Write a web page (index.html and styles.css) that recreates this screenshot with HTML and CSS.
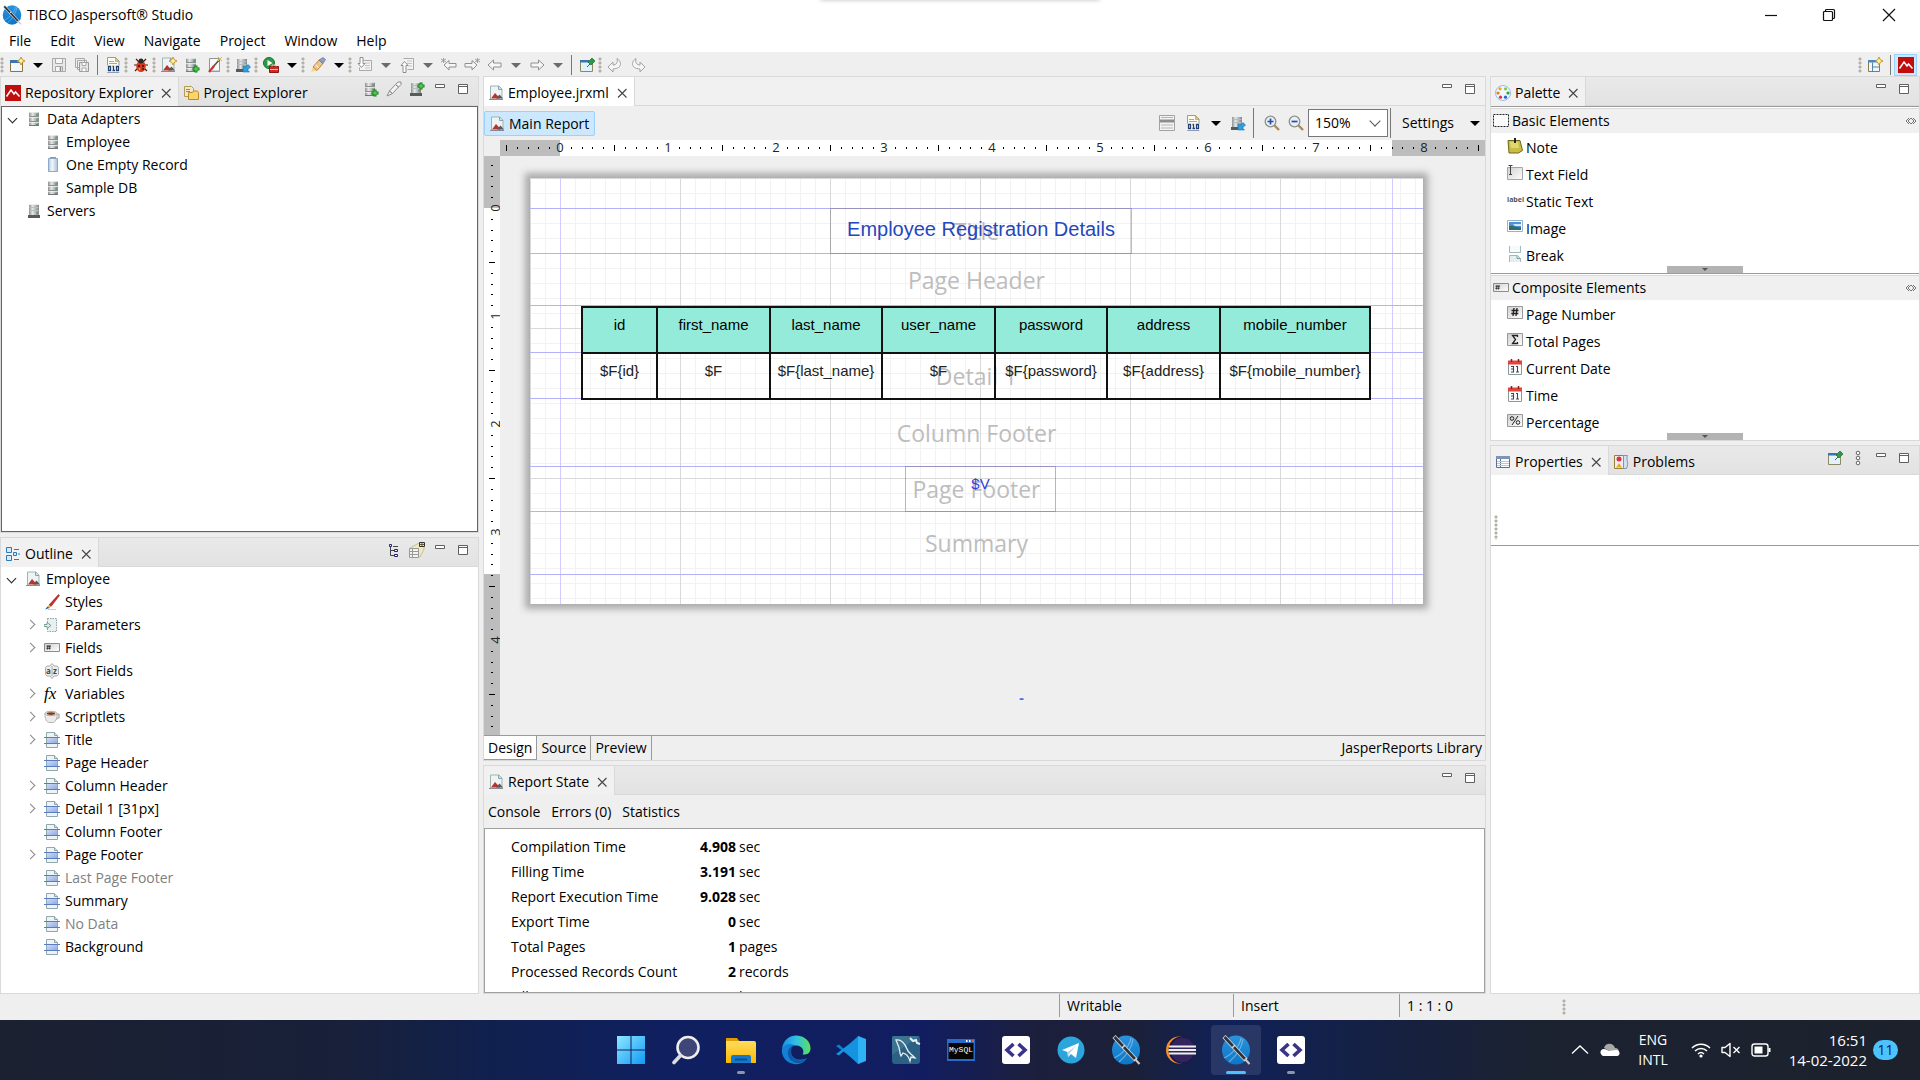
FILE: index.html
```html
<!DOCTYPE html>
<html lang="en">
<head>
<meta charset="utf-8">
<title>TIBCO Jaspersoft® Studio</title>
<link rel="stylesheet" href="styles.css">
</head>
<body>
<svg class="sprite" aria-hidden="true">
  <defs>
    <linearGradient id="g-metal" x1="0" x2="1"><stop offset="0" stop-color="#8d9191"/><stop offset=".35" stop-color="#e4e6e6"/><stop offset="1" stop-color="#7f8585"/></linearGradient>
    <linearGradient id="g-glass" x1="0" x2="1"><stop offset="0" stop-color="#a9c4de"/><stop offset=".4" stop-color="#f2f8fd"/><stop offset="1" stop-color="#a9c0d8"/></linearGradient>
    <linearGradient id="g-band" x1="0" y1="0" x2="1" y2="1"><stop offset="0" stop-color="#d5e2f5"/><stop offset="1" stop-color="#8faae6"/></linearGradient>
    <linearGradient id="g-box" x1="0" y1="0" x2="1" y2="1"><stop offset="0" stop-color="#cfcfcf"/><stop offset="1" stop-color="#fff"/></linearGradient>
    <linearGradient id="g-win" x1="0" y1="0" x2="1" y2="1"><stop offset="0" stop-color="#8fe6ff"/><stop offset="1" stop-color="#0f9bf5"/></linearGradient>
    <linearGradient id="g-fold" x1="0" y1="0" x2="0" y2="1"><stop offset="0" stop-color="#ffdc5e"/><stop offset="1" stop-color="#fbb800"/></linearGradient>
    <linearGradient id="g-edge" x1="0" y1="0" x2="1" y2="0"><stop offset="0" stop-color="#1b8fe0"/><stop offset=".5" stop-color="#2fc0e6"/><stop offset="1" stop-color="#5fe05a"/></linearGradient>
    <linearGradient id="g-jas" x1="0" y1="0" x2="0" y2="1"><stop offset="0" stop-color="#2b93dc"/><stop offset="1" stop-color="#0c76c8"/></linearGradient>
  </defs>
  <symbol id="i-db" viewBox="0 0 16 16"><path d="M3 1h10v14H3z" fill="url(#g-metal)"/><path d="M3 5.500h10M3 10.500h10" stroke="#8b9090"/><path d="M3 1.500h10M3 6.500h10M3 11.500h10" stroke="#f4f4f4" opacity=".7"/><path d="M3 14.500h10" stroke="#777"/><path d="M10 4h2M10 9h2M10 13.500h2" stroke="#4a9a5a"/></symbol>
  <symbol id="i-plus" viewBox="0 0 16 16"><path d="M12 8.500v7M8.500 12h7" stroke="#137a1c" stroke-width="3"/><path d="M12 9.500v5M9.500 12h5" stroke="#4fd04f" stroke-width="1.400"/></symbol>
  <symbol id="i-dbadd" viewBox="0 0 16 16"><use href="#i-db" x="-1" width="16" height="16"/><use href="#i-plus" width="16" height="16"/></symbol>
  <symbol id="i-glass" viewBox="0 0 16 16"><path d="M3.500 1.500h9v13h-9z" fill="url(#g-glass)" stroke="#8fa9c4"/><path d="M5 .5h6" stroke="#8b98a5"/></symbol>
  <symbol id="i-server" viewBox="0 0 16 16"><path d="M3 1h10v11H3z" fill="url(#g-metal)"/><path d="M3 1.500h10" stroke="#eee"/><path d="M3.500 4.500h9M3.500 7.500h9" stroke="#b8bcbc"/><path d="M2 12h12v3H2z" fill="#555b5b"/><path d="M10 10h2" stroke="#4a9a5a"/></symbol>
  <symbol id="i-serveradd" viewBox="0 0 16 16"><use href="#i-server" x="-1" width="16" height="16"/><use href="#i-plus" y="-7" width="16" height="16"/></symbol>
  <symbol id="i-serverblue" viewBox="0 0 16 16"><use href="#i-server" x="-1" width="16" height="16"/><path d="M8 8.500v6.500h6.500L12.500 13l3-3-2.500-2.500-3 3z" fill="#2f9fe6" stroke="#1670b0" stroke-width=".6"/></symbol>
  <symbol id="i-report" viewBox="0 0 16 16"><path d="M2.500 1h8.500l3 3v10.500h-11.500z" fill="#eef4f4" stroke="#9fb3b3"/><path d="M10.500 1v3.500h3.500" fill="#cfe0e0" stroke="#8fa5a5"/><path d="M3 13.500 7 8l5 5.500z" fill="#b8322e"/><path d="M8 13.500 11.500 9.500l3.500 4z" fill="#5e5555"/><path d="M1 14.500h14" stroke="#889"/></symbol>
  <symbol id="i-star" viewBox="0 0 16 16"><path d="M12 0l1.300 2.700L16 4l-2.700 1.300L12 8l-1.300-2.700L8 4l2.700-1.300z" fill="#fff0a0" stroke="#c08d18" stroke-width=".9"/></symbol>
  <symbol id="i-reportnew" viewBox="0 0 16 16"><use href="#i-report" x="-1" width="16" height="16"/><use href="#i-star" width="16" height="16"/></symbol>
  <symbol id="i-new" viewBox="0 0 16 16"><path d="M1.500 4.500h12v10h-12z" fill="#f2f7fc" stroke="#8b7440"/><path d="M1 3h12v3H1z" fill="#3d74ad"/><use href="#i-star" width="16" height="16"/></symbol>
  <symbol id="i-save" viewBox="0 0 16 16"><path d="M1.500 1.500h13v13h-13z" fill="#e8e8e8" stroke="#a8a8a8"/><path d="M4.500 1.500h7v5h-7zM4.500 9.500h7v5h-7z" fill="#f6f6f6" stroke="#a8a8a8"/><path d="M9.500 10v4" stroke="#888" stroke-width="1.500"/></symbol>
  <symbol id="i-saveall" viewBox="0 0 16 16"><path d="M1.500 1.500h9v9h-9zM3.500 3.500h9v9h-9z" fill="#eee" stroke="#a8a8a8"/><path d="M5.500 5.500h9v9h-9z" fill="#e8e8e8" stroke="#999"/><path d="M8 5.500h4v3H8zM8 11h4v3.500H8z" fill="#fff" stroke="#a8a8a8"/></symbol>
  <symbol id="i-bin" viewBox="0 0 16 16"><path d="M2.500.5h8l3.500 3.500v11.500H2.500z" fill="#fbfbf2" stroke="#8e9db5"/><path d="M10.500.5v4H14z" fill="#e8c86a" stroke="#b59336" stroke-width=".6"/><path d="M4 4.500h5M4 6.500h8" stroke="#8fabd0"/><path d="M2 8.500h13v6.500H2z" fill="#fbfbf2"/><path d="M3.500 9.500h2v4h-2zM11.500 9.500h2v4h-2zM7.500 9.500h1v4m-1 0h2.500" fill="none" stroke="#22406f" stroke-width="1.300"/></symbol>
  <symbol id="i-bug" viewBox="0 0 16 16"><path d="M3 2l3 3M13 2l-3 3M1 8h4M15 8h-4M2 14l3-3M14 14l-3-3" stroke="#402010" stroke-width="1.200"/><ellipse cx="8" cy="9.500" rx="4.700" ry="5.500" fill="#d9381a"/><circle cx="8" cy="4" r="2.500" fill="#2a2a2a"/><circle cx="6" cy="9" r="1" fill="#3a0d00"/><circle cx="10" cy="9" r="1" fill="#3a0d00"/><circle cx="6.500" cy="12" r=".9" fill="#f2b13c"/><circle cx="10" cy="12" r=".9" fill="#3a0d00"/></symbol>
  <symbol id="i-wand" viewBox="0 0 16 16"><path d="M2.500 1.500h10v13h-10z" fill="#f7faf5" stroke="#8a9a90"/><path d="M6 10 13 2" stroke="#555" stroke-width="1.600"/><path d="M2 15l5-6" stroke="#c33" stroke-width="2.400"/><path d="M11 0l4 4M15 0l-4 4" stroke="#e4b53a"/><path d="M4 14h9" stroke="#a9b"/></symbol>
  <symbol id="i-run" viewBox="0 0 16 16"><circle cx="6" cy="6" r="5.500" fill="#2c9b45" stroke="#17702b"/><path d="M4.500 3l5 3-5 3z" fill="#fff"/><path d="M6.500 9.500h9v6h-9z" fill="#cf2a22" stroke="#8d1712"/><path d="M9 9.500v-1.500h4v1.500M7 12.500h8" stroke="#fbb" fill="none"/></symbol>
  <symbol id="i-torch" viewBox="0 0 16 16"><path d="M1 15l2-5 4 3.500z" fill="#f6d878"/><path d="M3 10 9 3l4 3.500-6 7z" fill="#f2c48a" stroke="#a8743a" stroke-width=".8"/><path d="M9 3l4-2.500 2.500 2L13 6.500z" fill="#8fa0c0" stroke="#56688d" stroke-width=".6"/><path d="M5.500 8l3 2.500" stroke="#fff"/></symbol>
  <symbol id="i-down" viewBox="0 0 16 16"><path d="M6.500 3.500h8v10h-12v-3" fill="#f4f4f4" stroke="#a9a9a9"/><path d="M8 6h5M8 8.500h5M8 11h5" stroke="#c2c2c2"/><path d="M3 .5h3v6h2L4.500 10.500 1 6.500h2z" fill="#fff" stroke="#8e8e8e"/></symbol>
  <symbol id="i-up" viewBox="0 0 16 16"><path d="M4.500 1.500h10v11h-6" fill="#f4f4f4" stroke="#a9a9a9"/><path d="M8 4h5M8 6.500h5M9 9h4" stroke="#c2c2c2"/><path d="M4 15.500h3v-7h2L5.500 4.500 2 8.500h2z" fill="#fff" stroke="#8e8e8e"/></symbol>
  <symbol id="i-back" viewBox="0 0 16 16"><path d="M1 8l5.500-5v3H14v4H6.500v3z" fill="#f6f6f6" stroke="#909090" stroke-linejoin="round"/></symbol>
  <symbol id="i-fwd" viewBox="0 0 16 16"><path d="M15 8 9.500 3v3H2v4h7.500v3z" fill="#f6f6f6" stroke="#909090" stroke-linejoin="round"/></symbol>
  <symbol id="i-backs" viewBox="0 0 16 16"><path d="M3 8l5-4.500v3h7v3.500H8V13z" fill="#f6f6f6" stroke="#909090" stroke-linejoin="round"/><path d="M2.500 1v5M0 2l5 3M5 2 0 5" stroke="#909090" stroke-width=".8"/></symbol>
  <symbol id="i-fwds" viewBox="0 0 16 16"><path d="M13 8 8 3.500v3H1v3.500h7V13z" fill="#f6f6f6" stroke="#909090" stroke-linejoin="round"/><path d="M13.500 1v5M11 2l5 3M16 2l-5 3" stroke="#909090" stroke-width=".8"/></symbol>
  <symbol id="i-pin" viewBox="0 0 16 16"><path d="M1.500 4.500h12v10h-12z" fill="#e2f2fb" stroke="#8d8a62"/><path d="M1 3h9v2.500H1z" fill="#3d74ad"/><path d="M8 10l3-3" stroke="#555"/><path d="M9 5l4-4 3 3-4 4z" fill="#2e9a48" stroke="#176a2b" stroke-width=".7"/></symbol>
  <symbol id="i-undo" viewBox="0 0 16 16"><path d="M1 10l5-5v3c3 0 5-2 4-6.500C14.500 4 16 11.500 6 12v3z" fill="#f6f6f6" stroke="#a2a2a2" stroke-linejoin="round"/></symbol>
  <symbol id="i-redo" viewBox="0 0 16 16"><path d="M15 10l-5-5v3C7 8 5 6 6 1.500 1.500 4 0 11.500 10 12v3z" fill="#f6f6f6" stroke="#a2a2a2" stroke-linejoin="round"/></symbol>
  <symbol id="i-persp" viewBox="0 0 16 16"><path d="M1.500 3.500h11v11h-11z" fill="#eef6fb" stroke="#8c7a48"/><path d="M1 3h12v2.500H1z" fill="#4d86bb"/><path d="M5.500 5.500v9M5.500 10h7" stroke="#5b83a3"/><use href="#i-star" width="16" height="16"/></symbol>
  <symbol id="i-jasper" viewBox="0 0 16 16"><path d="M0 0h16v16H0z" fill="#c00d0d"/><path d="M1.500 11.500 6 5l3 4 1.500-2 4 4.500" fill="none" stroke="#fff" stroke-width="1.500"/></symbol>
  <symbol id="i-project" viewBox="0 0 16 16"><path d="M1.500 1.500h7l2 2v8h-9z" fill="#f3e9c8" stroke="#b49a55"/><path d="M3 4.500h4M3 6.500h4" stroke="#6d8fc0"/><path d="M5.500 7.500h4l1-1.500h4l1 1.500v7h-10z" fill="#fbd46c" stroke="#b88a2a"/></symbol>
  <symbol id="i-link" viewBox="0 0 16 16"><path d="M1 15l2.500-5 3 2.500zM3.500 10l6-6.500 3 2.500-6 6.500zM9.500 3.500 12 1h3v2.500L12.500 6z" fill="#f4f4f4" stroke="#8c8c8c"/></symbol>
  <symbol id="i-min" viewBox="0 0 16 16"><path d="M3.500 3.500h9v3h-9z" fill="#fff" stroke="#606060"/></symbol>
  <symbol id="i-max" viewBox="0 0 16 16"><path d="M3.500 3.500h9v9h-9z" fill="#fff" stroke="#606060"/><path d="M3 5.500h10" stroke="#606060"/></symbol>
  <symbol id="i-x" viewBox="0 0 16 16"><path d="M4 4l8.500 8.500M12.500 4 4 12.500" stroke="#444" stroke-width="1.100"/></symbol>
  <symbol id="i-outline" viewBox="0 0 16 16"><path d="M1.500 1.500h5v5h-5zM1.500 9.500h5v5h-5z" fill="#d6eaf8" stroke="#2a7ab8"/><path d="M8.500 6.500h3v3h-3z" fill="#d6eaf8" stroke="#2a7ab8"/><path d="M9 3.500h5M13 8h2M9 13.500h5" stroke="#2a7ab8"/></symbol>
  <symbol id="i-treeview" viewBox="0 0 16 16"><path d="M4.500 4v9.500H8M4.500 8.500H8M7 4.500h5" fill="none" stroke="#444"/><path d="M3.500 2.500h2v2h-2zM8.500 7.500h3v2h-3zM8.500 12.500h3v2h-3z" fill="#fff" stroke="#24246e"/></symbol>
  <symbol id="i-thumb" viewBox="0 0 16 16"><path d="M1 6 10 1h5v6l-4 8z" fill="#efe9c4" stroke="#c9c08b"/><path d="M.5 6.500h9v9h-9z" fill="#f4f4ee" stroke="#999"/><path d="M.5 9.500h9M.5 12.500h9M3.500 7v8" stroke="#999"/><path d="M10.500.5h5v4h-5z" fill="#ffe64d" stroke="#333"/><path d="M13 .5v4M10.500 2.500h5" stroke="#333" stroke-width=".7"/></symbol>
  <symbol id="i-brush" viewBox="0 0 16 16"><path d="M5 11 14.500.5l1 1L7 12.500z" fill="#cc2e2e" stroke="#8d2222" stroke-width=".6"/><path d="M5 11l2 1.500-1.500 1.500L3.500 12.500z" fill="#d9b36a"/><path d="M3.500 12.500 5.500 14 1 15.500z" fill="#2c4fb0"/><path d="M4 15.500h8" stroke="#ccc"/></symbol>
  <symbol id="i-param" viewBox="0 0 16 16"><path d="M3.500 1.500h9v13h-9z" fill="#e7efef" stroke="#8fa5a5" stroke-dasharray="1.500 1"/><path d="M0 7.500h3V5.500l4 3-4 3V9.500H0z" fill="#dfeeea" stroke="#5f8a84" stroke-width=".8"/></symbol>
  <symbol id="i-fields" viewBox="0 0 16 16"><path d="M.5 3.500h15v8H.5z" fill="url(#g-box)" stroke="#8c8c8c"/><path d="M4 5l-.5 4.500M6 5l-.5 4.500M2.500 6.300h4.300M2.300 8.300h4.300" stroke="#333" stroke-width=".9"/></symbol>
  <symbol id="i-cup" viewBox="0 0 16 16"><path d="M12.500 5.500h2.500v3l-3.500 2" fill="none" stroke="#aaa" stroke-width="1.300"/><path d="M1 4.500h12c.5 5-2 9-4 9H5C3 13.500.5 9.500 1 4.500z" fill="#ececec" stroke="#b5b5b5"/><ellipse cx="7" cy="4.500" rx="6" ry="2.200" fill="#f7f3ee" stroke="#aaa"/><ellipse cx="7" cy="4.600" rx="4.300" ry="1.300" fill="#7b3e13"/></symbol>
  <symbol id="i-band" viewBox="0 0 16 16"><path d="M2.500.5h8l3 3v12h-11z" fill="#eef4f6" stroke="#8fa8ae"/><path d="M10.500.5v3h3" fill="#cfe0e0" stroke="#8fa5a5"/><path d="M3 5h10v6H3z" fill="url(#g-band)"/><path d="M0 5.500h16M0 11.500h16" stroke="#5c7cc0"/></symbol>
  <symbol id="i-palette" viewBox="0 0 16 16"><circle cx="8" cy="8" r="7.500" fill="#eef6ff" stroke="#9dbce0"/><circle cx="5" cy="3.800" r="1.600" fill="#f2a516"/><circle cx="10.500" cy="3.800" r="1.600" fill="#8cc63f"/><circle cx="3" cy="8" r="1.600" fill="#f07b16"/><circle cx="13" cy="8" r="1.600" fill="#2ba82b"/><circle cx="5.500" cy="12.200" r="1.600" fill="#d33"/><circle cx="10.500" cy="12.200" r="1.600" fill="#2c62d6"/></symbol>
  <symbol id="i-dash" viewBox="0 0 16 16"><path d="M.5 1.500h15v12H.5z" fill="#fafafa" stroke="#222" stroke-dasharray="2 1"/></symbol>
  <symbol id="i-note" viewBox="0 0 16 16"><path d="M1 2.500h12l2.500 10-4 2.500H2z" fill="#c9bd45" stroke="#6f671e"/><path d="M3 4h8l1 6H4z" fill="#e2d96c"/><path d="M8 0v5" stroke="#222" stroke-width="2"/></symbol>
  <symbol id="i-tfield" viewBox="0 0 16 16"><path d="M.5 2.500h15v12H.5z" fill="url(#g-box)" stroke="#a5a5a5"/><path d="M1.500.5h4M3.500.5v9M2 9.500h3" stroke="#444"/></symbol>
  <symbol id="i-image" viewBox="0 0 16 16"><path d="M.5 1.500h15v11H.5z" fill="#fff" stroke="#9ab0c4"/><path d="M2 3h12v8H2z" fill="#4b94dc"/><path d="M2 7c4-1 7 2 12 1v3H2z" fill="#356b6b"/><path d="M6 5h8v2H8z" fill="#cfe8fa"/></symbol>
  <symbol id="i-break" viewBox="0 0 16 16"><path d="M2.500 0v6.500h11V0" fill="#f6fafa" stroke="#a3b8b8"/><path d="M2.500 16V9.500h8l3 3V16" fill="#e5efef" stroke="#a3b8b8"/><path d="M10 9.500v3h3.500" fill="none" stroke="#7fa09e"/></symbol>
  <symbol id="i-hash" viewBox="0 0 16 16"><path d="M.5 1.500h15v12H.5z" fill="url(#g-box)" stroke="#999"/><path d="M7 3l-1 8M10 3 9 11M4.500 5.500h7M4.300 8.500h7" stroke="#222" stroke-width="1.300"/></symbol>
  <symbol id="i-sigma" viewBox="0 0 16 16"><path d="M.5 1.500h15v12H.5z" fill="url(#g-box)" stroke="#999"/><path d="M10.500 5V3.500h-5L8.500 7.500l-3 4h5V10" fill="none" stroke="#222" stroke-width="1.300"/></symbol>
  <symbol id="i-cal" viewBox="0 0 16 16"><path d="M1.500 3.500h13v12h-13z" fill="#fdfdfd" stroke="#8a9a9a"/><path d="M1 1.500h14v4H1z" fill="#e2433c"/><path d="M4.500 0v3M11.500 0v3" stroke="#8b1f1b" stroke-width="1.500"/><path d="M4 7.500h2.500v5.500H4M4 10h2.500M10.500 7v6M9 13h3M10.500 7.500H9" fill="none" stroke="#445" stroke-width="1.100"/></symbol>
  <symbol id="i-pct" viewBox="0 0 16 16"><path d="M.5 1.500h15v12H.5z" fill="url(#g-box)" stroke="#999"/><circle cx="5" cy="5.500" r="1.800" fill="none" stroke="#222"/><circle cx="11" cy="9.500" r="1.800" fill="none" stroke="#222"/><path d="M11 3 5 12" stroke="#222"/></symbol>
  <symbol id="i-pindrawer" viewBox="0 0 16 16"><path d="M6 5 3 8l3 3M10 5l3 3-3 3M5 8l3-3 3 3-3 3z" fill="none" stroke="#777"/></symbol>
  <symbol id="i-props" viewBox="0 0 16 16"><path d="M1.500 2.500h13v11h-13z" fill="#fff" stroke="#5a6f92"/><path d="M1 2h14v3H1z" fill="#7f93b5"/><path d="M5.500 5v8" stroke="#5a6f92"/><path d="M2 7.500h12M2 9.500h12M2 11.500h12" stroke="#b7c6dd"/></symbol>
  <symbol id="i-problems" viewBox="0 0 16 16"><path d="M1.500 1.500h9v13h-9z" fill="#e9eef6" stroke="#98803e"/><path d="M10.500 1.500h4c-2 4 2 7-1 13h-3z" fill="#d3e0f0" stroke="#8094b5"/><circle cx="6" cy="5" r="2.500" fill="#dd3333"/><path d="M6 9l3 4.500H3z" fill="#f0a822"/></symbol>
  <symbol id="i-menu" viewBox="0 0 16 16"><g fill="#fff" stroke="#666"><circle cx="8" cy="3" r="1.800"/><circle cx="8" cy="8" r="1.800"/><circle cx="8" cy="13" r="1.800"/></g></symbol>
  <symbol id="i-rows" viewBox="0 0 16 16"><path d="M.5.5h15v15H.5z" fill="#f4f4f4" stroke="#a2a2a2"/><path d="M1 4.500h14v3H1z" fill="#8d8d8d"/><path d="M2 2.500h12M2 10h12M2 13h12" stroke="#b4b4b4"/></symbol>
  <symbol id="i-zin" viewBox="0 0 16 16"><path d="M10.500 10.500 15 15" stroke="#a88a62" stroke-width="2.400"/><circle cx="6.500" cy="6.500" r="5.300" fill="#e6effa" stroke="#8f8f86" stroke-width="1.300"/><path d="M3.500 6.500h6M6.500 3.500v6" stroke="#2850a0" stroke-width="1.700"/></symbol>
  <symbol id="i-zout" viewBox="0 0 16 16"><path d="M10.500 10.500 15 15" stroke="#a88a62" stroke-width="2.400"/><circle cx="6.500" cy="6.500" r="5.300" fill="#e6effa" stroke="#8f8f86" stroke-width="1.300"/><path d="M3.500 6.500h6" stroke="#2850a0" stroke-width="1.700"/></symbol>
  <symbol id="i-app" viewBox="0 0 30 30"><ellipse cx="15" cy="15" rx="14" ry="14.500" fill="url(#g-jas)"/><path d="M20 3c-1 7-8 16-17 20M22 4c-1 9-7 17-14 23" stroke="#cfe4f5" stroke-opacity=".45" stroke-width="1.200" fill="none"/><path d="M3 1.500 25 25" stroke="#d6dade" stroke-width="4.200"/><path d="M3.500 2 24 24" stroke="#2f3238" stroke-width="2.600"/><path d="M11 13l3-3" stroke="#ddd" stroke-width="1.500"/><path d="M24 24l4.500 5" stroke="#c8c8c8" stroke-width="2"/></symbol>
  <symbol id="i-brackets" viewBox="0 0 30 30"><rect x="1" y="1" width="28" height="28" rx="3" fill="#fff"/><path d="M12.500 9 6 15l6.500 6M17.500 9l6.500 6-6.500 6" fill="none" stroke="#3a3488" stroke-width="3.600"/></symbol>
</svg>

<header class="titlebar">
  <svg class="app-icon"><use href="#i-app"/></svg>
  <h1>TIBCO Jaspersoft® Studio</h1>
  <div class="window-buttons">
    <button aria-label="Minimize"><svg viewBox="0 0 14 14"><path d="M1 7.500h12" stroke="#111" stroke-width="1.200"/></svg></button>
    <button aria-label="Restore"><svg viewBox="0 0 14 14"><path d="M3.500 3V2.500a1 1 0 0 1 1-1h7a1 1 0 0 1 1 1v7a1 1 0 0 1-1 1H11M1.500 4.500a1 1 0 0 1 1-1h7a1 1 0 0 1 1 1v7a1 1 0 0 1-1 1h-7a1 1 0 0 1-1-1z" fill="none" stroke="#111" stroke-width="1.200"/></svg></button>
    <button aria-label="Close"><svg viewBox="0 0 14 14"><path d="M1 1l12 12M13 1 1 13" stroke="#111" stroke-width="1.200"/></svg></button>
  </div>
  <div class="snap-handle"></div>
</header>

<nav class="menubar">
  <button>File</button><button>Edit</button><button>View</button><button>Navigate</button><button>Project</button><button>Window</button><button>Help</button>
</nav>

<div class="toolbar">
  <i class="grip"></i>
  <button aria-label="New"><svg><use href="#i-new"/></svg></button><button class="arrow" aria-label="New menu"></button>
  <button aria-label="Save"><svg><use href="#i-save"/></svg></button>
  <button aria-label="Save all"><svg><use href="#i-saveall"/></svg></button><i class="sep"></i>
  <button aria-label="Compile"><svg><use href="#i-bin"/></svg></button><i class="grip"></i>
  <button aria-label="Debug"><svg><use href="#i-bug"/></svg></button><i class="grip"></i>
  <button aria-label="New report"><svg><use href="#i-reportnew"/></svg></button>
  <button aria-label="New data adapter"><svg><use href="#i-dbadd"/></svg></button>
  <button aria-label="New style"><svg><use href="#i-wand"/></svg></button><i class="grip"></i>
  <button aria-label="Publish"><svg><use href="#i-serverblue"/></svg></button><i class="grip"></i>
  <button aria-label="Run"><svg><use href="#i-run"/></svg></button><button class="arrow" aria-label="Run menu"></button><i class="grip"></i>
  <button aria-label="Search"><svg><use href="#i-torch"/></svg></button><button class="arrow" aria-label="Search menu"></button><i class="grip"></i>
  <button aria-label="Next annotation"><svg><use href="#i-down"/></svg></button><button class="arrow dim" aria-label="Next annotation menu"></button>
  <button aria-label="Previous annotation"><svg><use href="#i-up"/></svg></button><button class="arrow dim" aria-label="Previous annotation menu"></button>
  <button aria-label="Previous edit"><svg><use href="#i-backs"/></svg></button>
  <button aria-label="Next edit"><svg><use href="#i-fwds"/></svg></button>
  <button aria-label="Back"><svg><use href="#i-back"/></svg></button><button class="arrow dim" aria-label="Back menu"></button>
  <button aria-label="Forward"><svg><use href="#i-fwd"/></svg></button><button class="arrow dim" aria-label="Forward menu"></button><i class="sep"></i>
  <button aria-label="Pin editor"><svg><use href="#i-pin"/></svg></button><i class="grip"></i>
  <button aria-label="Undo"><svg><use href="#i-undo"/></svg></button>
  <button aria-label="Redo"><svg><use href="#i-redo"/></svg></button>
  <span class="spacer"></span>
  <i class="grip"></i>
  <button aria-label="Open perspective"><svg><use href="#i-persp"/></svg></button><i class="sep"></i>
  <button class="on" aria-label="Report design perspective"><svg><use href="#i-jasper"/></svg></button>
</div>

<main class="workbench">
  <div class="column left">
    <section class="panel repo">
      <div class="strip">
        <div class="tab active"><svg><use href="#i-jasper"/></svg><button>Repository Explorer</button><button class="close" aria-label="Close"><svg><use href="#i-x"/></svg></button></div>
        <div class="tab"><svg><use href="#i-project"/></svg><button>Project Explorer</button></div>
        <div class="tools">
          <button aria-label="Create data adapter"><svg><use href="#i-dbadd"/></svg></button>
          <button aria-label="Link"><svg><use href="#i-link"/></svg></button>
          <button aria-label="Create server"><svg><use href="#i-serveradd"/></svg></button>
          <button aria-label="Minimize"><svg><use href="#i-min"/></svg></button>
          <button aria-label="Maximize"><svg><use href="#i-max"/></svg></button>
        </div>
      </div>
      <ul class="tree framed">
        <li class="open"><svg><use href="#i-db"/></svg>Data Adapters</li>
        <li class="sub"><svg><use href="#i-db"/></svg>Employee</li>
        <li class="sub"><svg><use href="#i-glass"/></svg>One Empty Record</li>
        <li class="sub"><svg><use href="#i-db"/></svg>Sample DB</li>
        <li><svg><use href="#i-server"/></svg>Servers</li>
      </ul>
    </section>
    <section class="panel outline">
      <div class="strip">
        <div class="tab active"><svg><use href="#i-outline"/></svg><button>Outline</button><button class="close" aria-label="Close"><svg><use href="#i-x"/></svg></button></div>
        <div class="tools">
          <button aria-label="Tree view"><svg><use href="#i-treeview"/></svg></button>
          <button aria-label="Thumbnail view"><svg><use href="#i-thumb"/></svg></button>
          <button aria-label="Minimize"><svg><use href="#i-min"/></svg></button>
          <button aria-label="Maximize"><svg><use href="#i-max"/></svg></button>
        </div>
      </div>
      <ul class="tree">
        <li class="open"><svg><use href="#i-report"/></svg>Employee</li>
        <li class="sub"><svg><use href="#i-brush"/></svg>Styles</li>
        <li class="sub more"><svg><use href="#i-param"/></svg>Parameters</li>
        <li class="sub more"><svg><use href="#i-fields"/></svg>Fields</li>
        <li class="sub"><svg viewBox="0 0 16 16"><path d="M3 3h3l2-2.500L10 3h3l1.500 1.500v7L13 13h-3l-2 2.500L6 13H3l-1.500-1.500v-7z" fill="#ededed" stroke="#aaa"/><path d="M8 3v10" stroke="#aaa"/><text x="2" y="11" font-size="8" class="glyph">a</text><text x="9" y="11" font-size="8" class="glyph">z</text></svg>Sort Fields</li>
        <li class="sub more"><span class="fx">fx</span>Variables</li>
        <li class="sub more"><svg><use href="#i-cup"/></svg>Scriptlets</li>
        <li class="sub more"><svg><use href="#i-band"/></svg>Title</li>
        <li class="sub"><svg><use href="#i-band"/></svg>Page Header</li>
        <li class="sub more"><svg><use href="#i-band"/></svg>Column Header</li>
        <li class="sub more"><svg><use href="#i-band"/></svg>Detail 1 [31px]</li>
        <li class="sub"><svg><use href="#i-band"/></svg>Column Footer</li>
        <li class="sub more"><svg><use href="#i-band"/></svg>Page Footer</li>
        <li class="sub off"><svg><use href="#i-band"/></svg>Last Page Footer</li>
        <li class="sub"><svg><use href="#i-band"/></svg>Summary</li>
        <li class="sub off"><svg><use href="#i-band"/></svg>No Data</li>
        <li class="sub"><svg><use href="#i-band"/></svg>Background</li>
      </ul>
    </section>
  </div>

  <div class="column center">
    <section class="panel editor">
      <div class="strip light">
        <div class="tab active"><svg><use href="#i-report"/></svg><button>Employee.jrxml</button><button class="close" aria-label="Close"><svg><use href="#i-x"/></svg></button></div>
        <div class="tools">
          <button aria-label="Minimize"><svg><use href="#i-min"/></svg></button>
          <button aria-label="Maximize"><svg><use href="#i-max"/></svg></button>
        </div>
      </div>
      <div class="editor-bar">
        <button class="crumb"><svg><use href="#i-report"/></svg>Main Report</button>
        <span class="spacer"></span>
        <button class="tool" aria-label="Bands"><svg><use href="#i-rows"/></svg></button>
        <button class="tool" aria-label="Compile report"><svg><use href="#i-bin"/></svg></button>
        <button class="arrow" aria-label="Compile menu"></button>
        <button class="tool" aria-label="Publish report"><svg><use href="#i-serverblue"/></svg></button>
        <i class="rule"></i>
        <button class="zoom" aria-label="Zoom in"><svg><use href="#i-zin"/></svg></button>
        <button class="zoom" aria-label="Zoom out"><svg><use href="#i-zout"/></svg></button>
        <span class="combo"><select aria-label="Zoom level"><option>150%</option></select></span>
        <i class="rule"></i>
        <button class="settings">Settings</button>
        <button class="arrow" aria-label="Settings menu"></button>
      </div>
      <div class="design">
        <svg class="ruler-x" aria-hidden="true">
          <defs><pattern id="tick-x" x="60" y="0" width="108" height="16" patternUnits="userSpaceOnUse"><path d="M11 7h1v2h-1zM22 7h1v2h-1zM32 7h1v2h-1zM43 7h1v2h-1zM54 5h1v6h-1zM65 7h1v2h-1zM76 7h1v2h-1zM86 7h1v2h-1zM97 7h1v2h-1z"/></pattern></defs>
          <rect width="100%" height="16" fill="#bdbdbd"/><rect x="60" width="832" height="16" fill="#fff"/><rect width="100%" height="16" fill="url(#tick-x)"/>
          <text x="60" y="12">0</text><text x="168" y="12">1</text><text x="276" y="12">2</text><text x="384" y="12">3</text><text x="492" y="12">4</text><text x="600" y="12">5</text><text x="708" y="12">6</text><text x="816" y="12">7</text><text x="924" y="12">8</text>
        </svg>
        <svg class="ruler-y" aria-hidden="true">
          <defs><pattern id="tick-y" x="0" y="52" width="16" height="108" patternUnits="userSpaceOnUse"><path d="M7 11h2v1h-2zM7 22h2v1h-2zM7 32h2v1h-2zM7 43h2v1h-2zM5 54h6v1h-6zM7 65h2v1h-2zM7 76h2v1h-2zM7 86h2v1h-2zM7 97h2v1h-2z"/></pattern></defs>
          <rect width="16" height="100%" fill="#bdbdbd"/><rect y="52" width="16" height="366" fill="#fff"/><rect width="16" height="100%" fill="url(#tick-y)"/>
          <text transform="translate(16 52) rotate(-90)">0</text><text transform="translate(16 160) rotate(-90)">1</text><text transform="translate(16 268) rotate(-90)">2</text><text transform="translate(16 376) rotate(-90)">3</text><text transform="translate(16 484) rotate(-90)">4</text>
        </svg>
        <div class="canvas">
          <div class="page">
            <div class="band b30"></div>
            <div class="band b45">Title</div>
            <div class="band b52">Page Header</div>
            <div class="band b47"></div>
            <div class="band b46">Detail 1</div>
            <div class="band b68">Column Footer</div>
            <div class="band b45">Page Footer</div>
            <div class="band b63">Summary</div>
            <div class="element title-text">Employee Registration Details</div>
            <table class="element fields">
              <colgroup><col class="c75"><col class="c113"><col class="c112"><col class="c113"><col class="c112"><col class="c113"><col class="c150"></colgroup>
              <tr><th>id</th><th>first_name</th><th>last_name</th><th>user_name</th><th>password</th><th>address</th><th>mobile_number</th></tr>
              <tr><td>$F{id}</td><td>$F</td><td>$F{last_name}</td><td>$F</td><td>$F{password}</td><td>$F{address}</td><td>$F{mobile_number}</td></tr>
            </table>
            <div class="element page-var">$V</div>
          </div>
          <span class="stray">-</span>
        </div>
      </div>
      <div class="modes">
        <button class="active">Design</button><button>Source</button><button>Preview</button>
        <span class="spacer"></span><span>JasperReports Library</span>
      </div>
    </section>
    <section class="panel state">
      <div class="strip">
        <div class="tab active"><svg><use href="#i-report"/></svg><button>Report State</button><button class="close" aria-label="Close"><svg><use href="#i-x"/></svg></button></div>
        <div class="tools">
          <button aria-label="Minimize"><svg><use href="#i-min"/></svg></button>
          <button aria-label="Maximize"><svg><use href="#i-max"/></svg></button>
        </div>
      </div>
      <div class="links"><button>Console</button><button>Errors (0)</button><button>Statistics</button></div>
      <div class="stats">
        <table>
          <tr><th>Compilation Time</th><td class="num">4.908</td><td>sec</td></tr>
          <tr><th>Filling Time</th><td class="num">3.191</td><td>sec</td></tr>
          <tr><th>Report Execution Time</th><td class="num">9.028</td><td>sec</td></tr>
          <tr><th>Export Time</th><td class="num">0</td><td>sec</td></tr>
          <tr><th>Total Pages</th><td class="num">1</td><td>pages</td></tr>
          <tr><th>Processed Records Count</th><td class="num">2</td><td>records</td></tr>
          <tr><th>Fill Size</th><td class="num">0</td><td>bytes</td></tr>
        </table>
      </div>
    </section>
  </div>

  <div class="column right">
    <section class="panel palette">
      <div class="strip">
        <div class="tab active"><svg><use href="#i-palette"/></svg><button>Palette</button><button class="close" aria-label="Close"><svg><use href="#i-x"/></svg></button></div>
        <div class="tools">
          <button aria-label="Minimize"><svg><use href="#i-min"/></svg></button>
          <button aria-label="Maximize"><svg><use href="#i-max"/></svg></button>
        </div>
      </div>
      <div class="drawer">
        <h2><svg><use href="#i-dash"/></svg>Basic Elements<svg class="pin"><use href="#i-pindrawer"/></svg></h2>
        <ul>
          <li><svg><use href="#i-note"/></svg>Note</li>
          <li><svg><use href="#i-tfield"/></svg>Text Field</li>
          <li><span class="label-icon">label</span>Static Text</li>
          <li><svg><use href="#i-image"/></svg>Image</li>
          <li><svg><use href="#i-break"/></svg>Break</li>
        </ul>
        <button class="scroll" aria-label="Scroll down"></button>
      </div>
      <div class="drawer">
        <h2><svg><use href="#i-fields"/></svg>Composite Elements<svg class="pin"><use href="#i-pindrawer"/></svg></h2>
        <ul>
          <li><svg><use href="#i-hash"/></svg>Page Number</li>
          <li><svg><use href="#i-sigma"/></svg>Total Pages</li>
          <li><svg><use href="#i-cal"/></svg>Current Date</li>
          <li><svg><use href="#i-cal"/></svg>Time</li>
          <li><svg><use href="#i-pct"/></svg>Percentage</li>
        </ul>
        <button class="scroll" aria-label="Scroll down"></button>
      </div>
    </section>
    <section class="panel properties">
      <div class="strip">
        <div class="tab active"><svg><use href="#i-props"/></svg><button>Properties</button><button class="close" aria-label="Close"><svg><use href="#i-x"/></svg></button></div>
        <div class="tab"><svg><use href="#i-problems"/></svg><button>Problems</button></div>
        <div class="tools">
          <button aria-label="Pin view"><svg><use href="#i-pin"/></svg></button>
          <button aria-label="View menu"><svg><use href="#i-menu"/></svg></button>
          <button aria-label="Minimize"><svg><use href="#i-min"/></svg></button>
          <button aria-label="Maximize"><svg><use href="#i-max"/></svg></button>
        </div>
      </div>
      <div class="prop-head"><i class="grip"></i></div>
    </section>
  </div>
</main>

<footer class="status">
  <span class="s-write">Writable</span><span class="s-insert">Insert</span><span class="s-pos">1 : 1 : 0</span><span class="s-end"><i class="grip"></i></span>
</footer>

<div class="taskbar">
  <div class="apps">
    <button aria-label="Start"><svg viewBox="0 0 30 30"><path d="M1 1h13.500v13.500H1zM15.500 1H29v13.500H15.500zM1 15.500h13.500V29H1zM15.500 15.500H29V29H15.500z" fill="url(#g-win)"/></svg></button>
    <button aria-label="Search"><svg viewBox="0 0 30 30"><circle cx="17" cy="12.500" r="10.500" fill="#3e4678" stroke="#eee" stroke-width="2.600"/><path d="M9.500 20.500 3 27.500" stroke="#ddd" stroke-width="3.600" stroke-linecap="round"/></svg></button>
    <button class="running" aria-label="File Explorer"><svg viewBox="0 0 30 30"><path d="M0 3h11l3 4H0z" fill="#e09b00"/><path d="M0 6h28q2 0 2 2v20H0z" fill="url(#g-fold)"/><path d="M5 28v-6q0-2 2-2h16q2 0 2 2v6z" fill="#1478cc"/><path d="M9 24.500h12" stroke="#0b4f92" stroke-width="2"/></svg></button>
    <button aria-label="Edge"><svg viewBox="0 0 30 30"><path d="M1 14C2 4 10 0 16 .5 24 1 30 7 29.500 14c-.5 5-5 6-8 5.500 2-2 1-9-6.500-9C8 10.500 2 13 1 14z" fill="url(#g-edge)"/><path d="M1 14c2-5 8-6 12-4-4 2-5 8-1 12s10 3 14 1c-3 5-8 7-13 6C5 28 0 21 1 14z" fill="#1580d8"/><path d="M13 10c-5 4-3 13 3 15 4 1 8 0 10-2-5 8-17 6-19-3-1-6 3-9 6-10z" fill="#0c59a4"/></svg></button>
    <button aria-label="Visual Studio Code"><svg viewBox="0 0 30 30"><path d="M22 1 8 14 3 9.500 0 11l24 18V21z" fill="#0c7fd0"/><path d="M22 29 8 16l-5 4.500L0 19 24 1v8z" fill="#1592e0"/><path d="M22 1l8 3v22l-8 3z" fill="#2fb2f5"/></svg></button>
    <button aria-label="MySQL Workbench"><svg viewBox="0 0 30 30"><rect x="1" y="1" width="28" height="28" rx="3" fill="#2b6283"/><path d="M1 1h28L1 20z" fill="#4d83a0" opacity=".5"/><path d="M5 5c6-1 9 4 11 9 1 4 5 5 8 9l-4-1-1 4c-2-6-4-7-7-8l-2 3c-2-4-1-8-3-11z" fill="none" stroke="#e8f0f4" stroke-width="1.300"/><path d="M19 3l3 3 3-1 1 3 3 1" stroke="#e8f0f4" stroke-width="2" fill="none"/></svg></button>
    <button aria-label="MySQL command line"><svg viewBox="0 0 30 30"><path d="M1 4h28v22H1z" fill="#2a6ac8"/><path d="M2.500 8h25v16h-25z" fill="#050505"/><path d="M20 6h1.500m1.500 0h1.500" stroke="#fff" stroke-width="2"/><path d="M26 6h2" stroke="#e06030" stroke-width="2"/><text x="3" y="17" font-size="8" class="mono">MySQL</text></svg></button>
    <button aria-label="Editor"><svg><use href="#i-brackets"/></svg></button>
    <button aria-label="Telegram"><svg viewBox="0 0 30 30"><circle cx="15" cy="15" r="13.500" fill="#2ca5dd"/><path d="M6 15 23 8l-3 15-5-4-3 3-.5-5z" fill="#fff"/><path d="M11.500 17 20 11l-6 7-2 4z" fill="#bcd8ea"/></svg></button>
    <button aria-label="Jaspersoft Studio"><svg><use href="#i-app"/></svg></button>
    <button aria-label="Eclipse"><svg viewBox="0 0 30 30"><ellipse cx="13" cy="15" rx="13" ry="13.500" fill="#f5902c"/><ellipse cx="15.500" cy="15" rx="13" ry="13.500" fill="#1c1440"/><ellipse cx="16.500" cy="15" rx="12" ry="12.500" fill="#33245f"/><path d="M3 11.500h27M2.500 15h28M3 18.500h27" stroke="#eee" stroke-width="2"/></svg></button>
    <button class="current" aria-label="Jaspersoft Studio, active"><svg><use href="#i-app"/></svg></button>
    <button class="running" aria-label="Editor window"><svg><use href="#i-brackets"/></svg></button>
  </div>
  <div class="tray">
    <button aria-label="Show hidden icons"><svg viewBox="0 0 20 20"><path d="M2 13.500 10 6l8 7.500" fill="none" stroke="#fff" stroke-width="1.300"/></svg></button>
    <button aria-label="OneDrive"><svg viewBox="0 0 20 20"><path d="M4 8c1-5 9-6 11 0 3 0 4 2 4 4l-8 0z" fill="#a8a8a8"/><path d="M3 16c-4-2-3-7 1-7 2 0 3 1 5 2l7-1c4 0 5 5 1 6z" fill="#fff"/></svg></button>
    <span class="lang">ENG<br>INTL</span>
    <button aria-label="Wi-Fi"><svg viewBox="0 0 20 20"><path d="M1 8c5-5 13-5 18 0M4 11c3.500-3.500 8.500-3.500 12 0M7 14c2-2 4-2 6 0" fill="none" stroke="#fff" stroke-width="1.500"/><circle cx="10" cy="16" r="1.600" fill="#fff"/></svg></button>
    <button aria-label="Muted"><svg viewBox="0 0 20 20"><path d="M1 7.500h3L9 3.500v13l-5-4H1z" fill="none" stroke="#fff" stroke-width="1.400" stroke-linejoin="round"/><path d="M12.500 7l6 6M18.500 7l-6 6" stroke="#fff" stroke-width="1.400"/></svg></button>
    <button aria-label="Battery"><svg viewBox="0 0 20 20"><rect x="1" y="4" width="16" height="12" rx="2.500" fill="none" stroke="#fff" stroke-width="1.400"/><path d="M3.500 6.500h8v7h-8z" fill="#fff"/><path d="M18.500 8v4" stroke="#fff" stroke-width="2"/></svg></button>
    <span class="clock">16:51<br>14-02-2022</span>
    <span class="badge">11</span>
  </div>
</div>
</body>
</html>
```
FILE: styles.css
```css
:root {
  --ui: "Open Sans", "Noto Sans", sans-serif;
  --edge: #d9d9d9;
  --face: #efefef;
  --rule: #9a9a9a;
}
* { box-sizing: border-box; }
body {
  margin: 0;
  height: 100vh;
  display: flex;
  flex-direction: column;
  overflow: hidden;
  background: var(--face);
  color: #000;
  font: 14px/20px var(--ui);
}
button { border: 0; padding: 0; background: none; font: inherit; color: inherit; white-space: nowrap; }
ul { list-style: none; margin: 0; padding: 0; }
svg { width: 16px; height: 16px; flex: none; display: block; }
.sprite { position: absolute; width: 0; height: 0; }
.spacer { flex: 1; }
.glyph { font-family: var(--ui); font-weight: 700; fill: #444; }
.mono { font-family: "Liberation Mono", monospace; fill: #fff; }

.titlebar { position: relative; flex: none; display: flex; align-items: center; gap: 5px; height: 29px; padding-left: 2px; background: #fff; }
.titlebar h1 { margin: 0; font: inherit; }
.app-icon { width: 20px; height: 20px; }
.window-buttons { margin-left: auto; display: flex; }
.window-buttons button { width: 58px; height: 28px; display: grid; place-items: center; }
.window-buttons button:last-child { width: 62px; }
.window-buttons svg { width: 14px; height: 14px; }
.snap-handle { position: absolute; top: -4px; left: 50%; width: 280px; height: 4px; margin-left: -140px; border-radius: 4px; box-shadow: 0 0 4px #bbb; }

.menubar { flex: none; display: flex; gap: 1px; height: 23px; padding-top: 1px; background: #fff; }
.menubar button { padding: 0 9px; }

.toolbar { flex: none; display: flex; align-items: center; height: 24px; padding-top: 2px; }
.toolbar > button { width: 23px; height: 22px; display: grid; place-items: center; }
.toolbar > .arrow, .editor-bar > .arrow { width: 19px; height: 22px; display: grid; place-items: center; }
.arrow::before { content: ""; border: 5px solid transparent; border-top-color: #000; border-bottom: 0; }
.arrow.dim::before { border-top-color: #6b6b6b; }
.grip { width: 5px; height: 16px; flex: none; background: radial-gradient(circle at 2px 2px, #b4b0a6 1px, transparent 2px) 0 0 / 5px 4px; }
.sep { width: 8px; height: 20px; flex: none; background: linear-gradient(#777, #777) center / 1px 100% no-repeat; }
.toolbar > .on { margin-right: 3px; background: #cce8ff; border: 1px solid #99d1ff; }

.workbench {
  flex: 1;
  min-height: 0;
  display: grid;
  grid-template-columns: minmax(0, 479fr) minmax(0, 1003fr) minmax(0, 430fr);
  grid-template-rows: minmax(0, 1fr);
  gap: 4px;
}
.column { display: flex; flex-direction: column; gap: 4px; min-height: 0; }
.panel { display: flex; flex-direction: column; min-height: 0; border: 1px solid var(--edge); }
.repo, .outline { flex: 1 1 0; }
.editor { flex: 686 1 0; }
.state { flex: 228 1 0; }
.palette { flex: none; background: #fff; }
.properties { flex: 1 1 0; background: #fff; }

.strip { flex: none; display: flex; height: 29px; background: linear-gradient(#e9e9e9, #e2e2e2); box-shadow: inset 0 -1px var(--edge); }
.strip.light { background: #f1f1f1; }
.tab { display: flex; align-items: center; gap: 4px; padding: 2px 4px 0; }
.tab.active { background: #f1f1f1; border-right: 1px solid var(--edge); }
.light .tab.active { background: #fff; }
.tab .close { margin: 0 0 0 1px; }
.tools { margin-left: auto; display: flex; gap: 7px; padding: 4px 7px 0 0; align-items: flex-start; height: 24px; }

.tree { flex: 1; min-height: 0; background: #fff; }
.tree.framed { border: 1px solid #646464; }
.tree li { display: flex; align-items: center; gap: 5px; height: 23px; padding-left: 24px; }
.tree li.sub { padding-left: 43px; }
.tree li::before { content: ""; width: 6px; height: 6px; margin: 0 0 0 -17px; border: solid transparent; border-width: 0 1px 1px 0; transform: rotate(45deg); }
.tree li.open::before { border-color: #222; }
.tree li.more::before { border-color: #888; transform: rotate(-45deg); }
.tree li svg, .tree li .fx { margin-left: 5px; }
.tree .off { color: #808080; }
.fx { width: 16px; font: italic 17px/16px "Liberation Serif", serif; }

.editor-bar { flex: none; display: flex; align-items: center; height: 34px; padding-right: 1px; }
.crumb { display: flex; align-items: center; gap: 4px; height: 25px; padding: 2px 5px 0 4px; border: 1px solid #99d1ff; border-radius: 2px; background: #cce8ff; }
.editor-bar .tool { width: 26px; display: grid; place-items: center; }
.editor-bar .zoom { width: 24px; display: grid; place-items: center; }
.rule { width: 1px; height: 30px; margin: 0 2px; background: #777; }
.rule + .zoom { margin-left: 4px; }
.combo { position: relative; width: 80px; height: 28px; border: 1px solid #777; background: #fff; }
.combo select { width: 100%; height: 100%; border: 0; padding: 0 6px; appearance: none; background: none; font: inherit; color: inherit; }
.combo::after { content: ""; position: absolute; right: 8px; top: 7px; width: 7px; height: 7px; border: solid #555; border-width: 0 1px 1px 0; transform: rotate(45deg); pointer-events: none; }
.settings { padding: 0 11px 0 9px; }

.design { flex: 1; min-height: 0; display: grid; grid-template: 16px minmax(0, 1fr) / 16px minmax(0, 1fr); }
.ruler-x { grid-area: 1 / 2; width: 100%; height: 16px; }
.ruler-y { grid-area: 2 / 1; width: 16px; height: 100%; }
.ruler-x text, .ruler-y text { font: 13px var(--ui); text-anchor: middle; fill: #222; }
.canvas { grid-area: 2 / 2; position: relative; overflow: hidden; padding: 22px 30px; }
.page {
  position: relative;
  width: 893px;
  height: 426px;
  display: flex;
  flex-direction: column;
  background:
    linear-gradient(#d0ccff, #d0ccff) 30px 0 / 1px 100% no-repeat,
    linear-gradient(#d0ccff, #d0ccff) 862px 0 / 1px 100% no-repeat,
    linear-gradient(90deg, #d9d9d9 1px, transparent 1px) 0 0 / 150px 150px,
    linear-gradient(#d9d9d9 1px, transparent 1px) 0 0 / 150px 150px,
    linear-gradient(90deg, #f2f2f2 1px, transparent 1px) 0 0 / 15px 15px,
    linear-gradient(#f2f2f2 1px, transparent 1px) 0 0 / 15px 15px,
    #fff;
  box-shadow: 0 0 7px 5px #aaa;
}
.band { flex: none; display: grid; place-items: center; border-bottom: 1px solid #b5b0fa; font-size: 23px; line-height: 30px; color: #bdbdbd; }
.b30 { height: 31px; }
.b45 { height: 45px; }
.b46 { height: 46px; }
.b47 { height: 47px; }
.b52 { height: 52px; }
.b63 { height: 63px; }
.b68 { height: 68px; }
.element { position: absolute; font-family: "Liberation Sans", Arial, sans-serif; }
.title-text { left: 300px; top: 30px; width: 302px; height: 46px; border: 1px solid rgba(120, 120, 130, .5); font-size: 20px; line-height: 41px; text-align: center; color: #2447bd; }
.page-var { left: 375px; top: 288px; width: 151px; height: 46px; border: 1px solid rgba(120, 120, 130, .5); font-size: 15px; line-height: 34px; text-align: center; color: #3a3ae0; }
.fields { left: 51px; top: 128px; border-collapse: collapse; table-layout: fixed; width: 788px; font-size: 15px; line-height: 18px; }
.fields th, .fields td { height: 46px; padding: 8px 0 0; border: 2px solid #111; vertical-align: top; text-align: center; font-weight: 400; white-space: nowrap; }
.fields th { background: #95ebda; }
.fields td { color: #222; }
.c75 { width: 75px; }
.c112 { width: 112px; }
.c113 { width: 113px; }
.c150 { width: 150px; }
.stray { position: absolute; left: 519px; top: 533px; color: #4a6fdc; font: 700 15px/18px "Liberation Sans", Arial, sans-serif; }

.modes { flex: none; display: flex; height: 25px; padding-right: 3px; border-top: 1px solid var(--rule); line-height: 24px; }
.modes button { padding: 0 4px; border-right: 1px solid var(--rule); }
.modes .active { background: #fff; border-bottom: 1px solid var(--rule); }

.links { flex: none; display: flex; gap: 11px; height: 33px; padding: 0 4px; align-items: center; }
.stats { flex: 1; min-height: 0; overflow: hidden; border: 1px solid #a0a0a0; background: #fff; padding: 5px 0 0 26px; }
.stats table { border-spacing: 0; }
.stats th, .stats td { height: 25px; padding: 0; font-weight: 400; text-align: left; }
.stats th { width: 175px; }
.stats .num { width: 53px; padding-right: 3px; font-weight: 700; text-align: right; }

.palette .strip { box-shadow: inset 0 -1px var(--edge), 0 1px var(--rule); }
.drawer { display: flex; flex-direction: column; margin-top: 1px; }
.drawer + .drawer { border-top: 1px solid var(--rule); margin-top: 0; }
.drawer h2 { display: flex; align-items: center; gap: 3px; height: 25px; margin: 1px 0; padding: 0 0 0 2px; background: #f0f0f0; border-top: 1px solid var(--edge); font: inherit; }
.drawer .pin { margin-left: auto; }
.drawer li { display: flex; align-items: center; gap: 3px; height: 27px; padding-left: 16px; }
.drawer li svg { margin-bottom: 4px; }
.label-icon { width: 16px; font: 700 7px/16px var(--ui); margin-bottom: 4px; color: #555; }
.scroll { align-self: center; width: 76px; height: 7px; margin-top: -3px; background: #b3b3b3; display: grid; place-items: center; }
.scroll::before { content: ""; border: 3px solid transparent; border-top-color: #555; border-bottom: 0; }
.prop-head { height: 71px; padding: 40px 0 0 3px; border-bottom: 1px solid var(--rule); }
.prop-head .grip { display: block; height: 25px; }

.status { flex: none; display: flex; height: 26px; line-height: 23px; }
.status span { height: 23px; padding-left: 7px; border-left: 1px solid var(--rule); }
.status .s-write { margin-left: auto; width: 174px; }
.s-insert { width: 166px; }
.s-pos { width: 163px; }
.status .s-end { width: 358px; padding: 5px 0; border: 0; }
.s-end .grip { display: block; }

.taskbar {
  position: relative;
  flex: none;
  height: 60px;
  display: flex;
  justify-content: center;
  color: #fff;
  background: linear-gradient(90deg, #1b2130 0, #18203a 18%, #10204f 26%, #10205f 34%, #111d60 48%, #1c1f3c 54%, #1b2038 59%, #0f2158 64%, #152042 72%, #1b2230 80%, #1c212c 100%);
}
.apps { display: flex; align-items: center; gap: 5px; padding-left: 2px; }
.apps button { position: relative; width: 50px; height: 50px; border-radius: 4px; display: grid; place-items: center; }
.apps svg { width: 30px; height: 30px; }
.apps .current { background: rgba(255, 255, 255, .1); }
.running::after, .current::after { content: ""; position: absolute; bottom: 1px; left: 50%; width: 8px; height: 3px; margin-left: -4px; border-radius: 2px; background: #8f95a8; }
.current::after { width: 20px; margin-left: -10px; background: #4cc2ff; }
.tray { position: absolute; right: 22px; top: 0; height: 60px; display: flex; align-items: center; gap: 10px; }
.tray svg { width: 20px; height: 20px; }
.lang { margin: 0 13px 0 8px; text-align: center; }
.clock { margin-left: 8px; font-size: 15px; text-align: right; }
.badge { width: 25px; height: 20px; margin-left: -4px; border-radius: 10px; background: #4cc2ff; color: #123; text-align: center; }
```
